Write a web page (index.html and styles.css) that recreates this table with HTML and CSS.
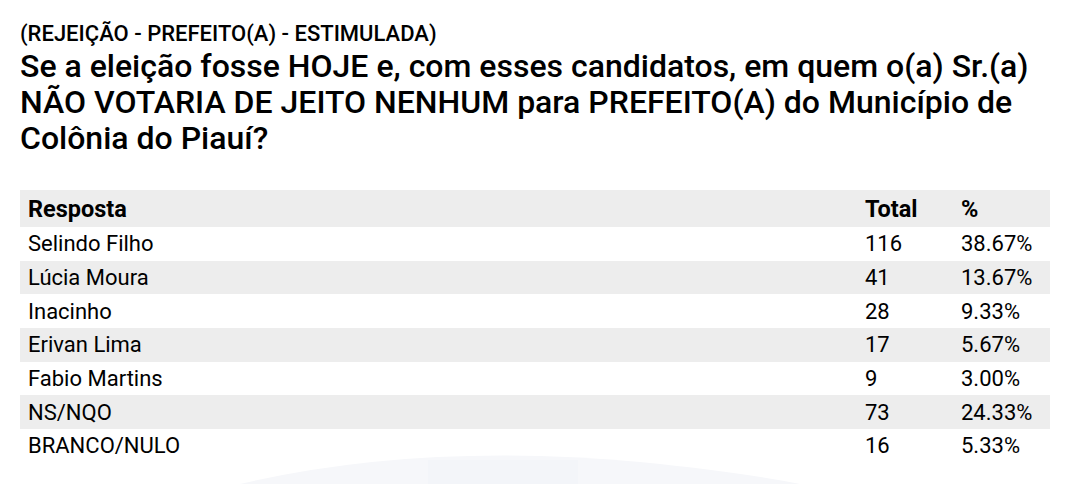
FILE: index.html
```html
<!DOCTYPE html>
<html lang="pt-BR">
<head>
<meta charset="utf-8">
<link rel="stylesheet" href="styles.css">
</head>
<body>
<div class="page">
  <svg class="watermark" width="1075" height="40" viewBox="0 0 1075 40" aria-hidden="true">
    <path d="M240 40 Q 420 -2 640 18 Q 740 28 800 40 Z" fill="#f6f7fa"/>
    <rect x="428" y="16" width="150" height="24" fill="#f3f5f9"/>
  </svg>
  <header class="head">
    <div class="kicker">(REJEIÇÃO - PREFEITO(A) - ESTIMULADA)</div>
    <h1 class="question">Se a eleição fosse HOJE e, com esses candidatos, em quem o(a) Sr.(a) NÃO VOTARIA DE JEITO NENHUM para PREFEITO(A) do Município de Colônia do Piauí?</h1>
  </header>
  <table class="results">
    <thead>
      <tr><th class="c-name">Resposta</th><th class="c-total">Total</th><th class="c-pct">%</th></tr>
    </thead>
    <tbody>
      <tr><td>Selindo Filho</td><td>116</td><td>38.67%</td></tr>
      <tr><td>Lúcia Moura</td><td>41</td><td>13.67%</td></tr>
      <tr><td>Inacinho</td><td>28</td><td>9.33%</td></tr>
      <tr><td>Erivan Lima</td><td>17</td><td>5.67%</td></tr>
      <tr><td>Fabio Martins</td><td>9</td><td>3.00%</td></tr>
      <tr><td>NS/NQO</td><td>73</td><td>24.33%</td></tr>
      <tr><td>BRANCO/NULO</td><td>16</td><td>5.33%</td></tr>
    </tbody>
  </table>
</div>
</body>
</html>
```
FILE: styles.css
```css
html, body {
  margin: 0;
  padding: 0;
  background: #fff;
}
body {
  font-family: Roboto, "Liberation Sans", sans-serif;
  color: #000;
  width: 1075px;
  height: 484px;
  overflow: hidden;
}
.page {
  position: relative;
  padding: 20px 25px 0 20px;
  height: 484px;
  box-sizing: border-box;
}
.watermark {
  position: absolute;
  left: 0;
  bottom: 0;
  z-index: 0;
}
.head, .results {
  position: relative;
  z-index: 1;
}
.kicker {
  font-size: 22px;
  font-weight: 500;
  line-height: 28px;
}
.question {
  margin: 0;
  font-size: 32px;
  font-weight: 500;
  line-height: 36px;
}
.results {
  margin-top: 34px;
  width: 1030px;
  border-collapse: collapse;
  font-size: 22px;
}
.results th {
  text-align: left;
  font-size: 23.5px;
  font-weight: 700;
  height: 37px;
  padding: 0 8px;
  background: #ededed;
}
.results td {
  height: 33.7px;
  padding: 0 8px;
}
.results tbody tr:nth-child(even) td {
  background: #ededed;
}
.c-total { width: 80px; }
.c-pct { width: 81px; }
```
